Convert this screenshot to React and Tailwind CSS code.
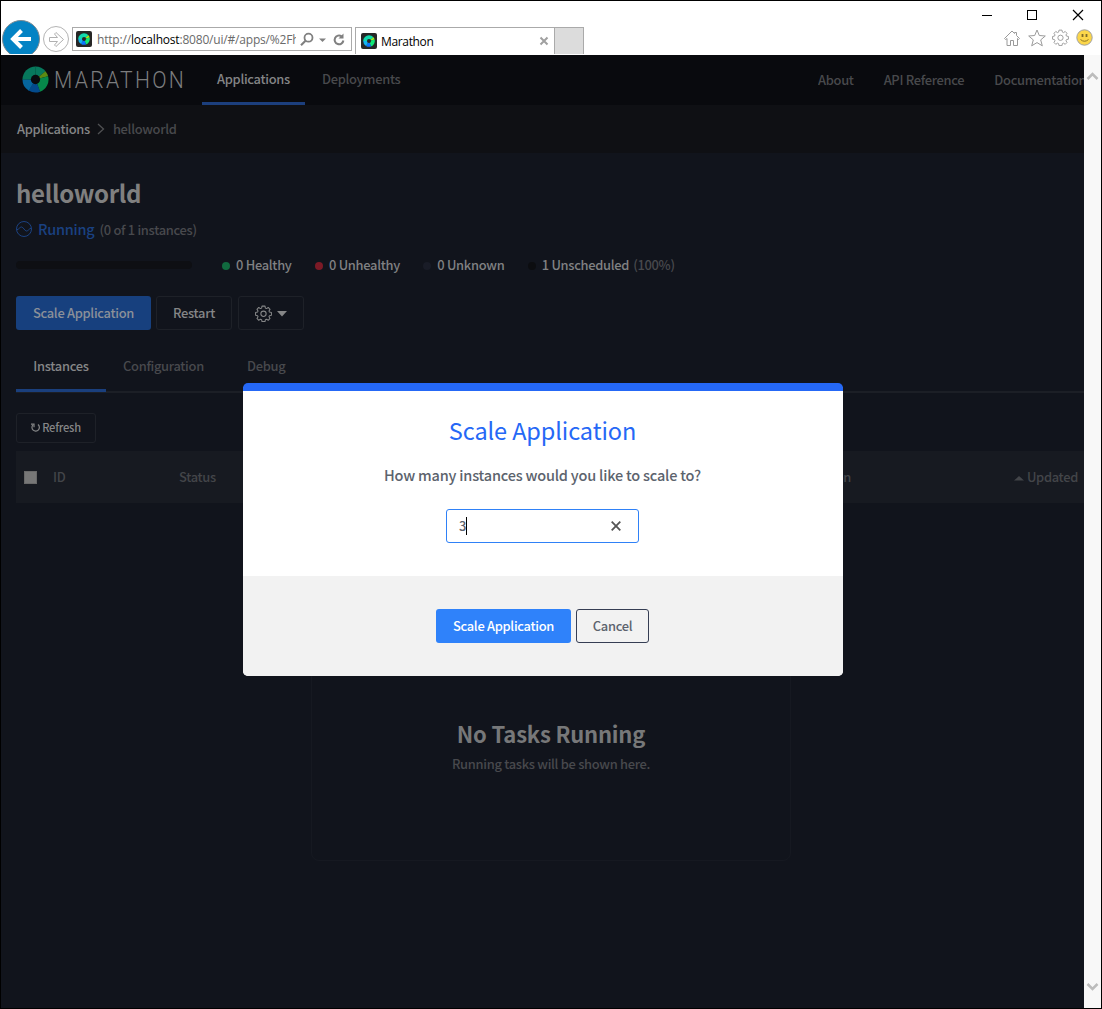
import React from "react";

function Ring({ className, dim }) {
  const c = dim
    ? ["#07785c", "#5b8a12", "#06884a", "#034a8c", "#06659c", "#07785c"]
    : ["#0fdfa8", "#a6f01c", "#10e878", "#0a74ff", "#12b4f0", "#10d8b0"];
  const seg = (a, b) => {
    const r = Math.PI / 180;
    const x1 = 14 + 13.5 * Math.cos(a * r), y1 = 14 + 13.5 * Math.sin(a * r);
    const x2 = 14 + 13.5 * Math.cos(b * r), y2 = 14 + 13.5 * Math.sin(b * r);
    return `M14 14L${x1} ${y1}A13.5 13.5 0 0 1 ${x2} ${y2}Z`;
  };
  const stops = [[-91, -39], [-40, -14], [-15, 70], [69, 122], [121, 181], [180, 270]];
  return (
    <svg viewBox="0 0 28 28" className={className}>
      {stops.map(([a, b], i) => <path key={a} d={seg(a, b)} fill={c[i]} />)}
      <circle cx="14" cy="14" r="4.8" fill={dim ? "#090a0e" : "#262626"} />
    </svg>
  );
}

function Favicon() {
  return (
    <span className="flex h-4 w-4 shrink-0 items-center justify-center rounded-[2px] bg-[#262626]">
      <Ring className="h-3 w-3" />
    </span>
  );
}

function Gear({ className, strokeWidth }) {
  return (
    <svg viewBox="0 0 18 18" className={className} fill="none" stroke="currentColor" strokeWidth={strokeWidth} strokeLinejoin="round">
      <path d="M7.4 1.2h3.2l.4 2.1 1.2.5 1.8-1.2 1.9 2-1.1 1.7.5 1.2 2.1.4v2.9l-2.1.5-.5 1.2 1.1 1.7-1.9 2-1.8-1.2-1.2.5-.4 2.1H7.4L7 15.500l-1.200-.500-1.800 1.200-1.900-2 1.100-1.700-.500-1.200L.6 10.800V7.900l2.100-.4.500-1.200L2.100 4.600l1.900-2 1.800 1.200L7 3.300z" />
      <circle cx="9" cy="9.300" r="2.800" />
    </svg>
  );
}

function BrowserChrome() {
  return (
    <header className="flex h-[54px] shrink-0 justify-between overflow-hidden bg-white">
      <div className="flex">
        <svg className="h-[53px] w-[71px] shrink-0" viewBox="0 0 71 53">
          <circle cx="20" cy="38" r="18.500" fill="#0483c4" stroke="#7c8a92" strokeWidth="1" />
          <path d="M30 38H13M20.500 29.500L12 38l8.500 8.500" stroke="#fff" strokeWidth="4" fill="none" />
          <circle cx="55" cy="38" r="12.500" fill="#fff" stroke="#b4b4b4" />
          <path d="M48.500 36.500h8l-3-3.500 1.500-1.500 7.500 7-7.500 7-1.500-1.500 3-3.500h-8z" fill="none" stroke="#b0b0b0" />
        </svg>
        <div className="mt-[26px] flex h-6 w-[280px] items-center border border-[#aaa] pl-[3px]">
          <Favicon />
          <span className="ml-[5px] mt-0.5 w-[199px] overflow-hidden whitespace-nowrap font-['Open_Sans',sans-serif] text-[12px] font-normal leading-5 tracking-[-0.190px] text-[#6a6a6a]">
            http://<span className="text-black">localhost</span>:8080/ui/#/apps/%2Fh
          </span>
          <svg viewBox="0 0 50 16" className="ml-[4px] mt-0.5 h-4 w-[50px] shrink-0" fill="none" stroke="#808080">
            <circle cx="8.500" cy="5.700" r="4" strokeWidth="1.800" />
            <path d="M5.500 8.700L1 13.200" strokeWidth="2.200" />
            <path d="M19 6.500h7l-3.500 3.500z" fill="#808080" stroke="none" />
            <path d="M41.500 4.200A4.400 4.400 0 1 0 43.400 8.500" strokeWidth="2" />
            <path d="M43.500 1.500V6.500H38.500z" fill="#808080" stroke="none" />
          </svg>
        </div>
        <div className="ml-[3px] mt-[26px] flex h-[27px] w-[200px] items-center border border-b-0 border-[#aaa] pl-[5px] pr-[5px]">
          <Favicon />
          <span className="ml-[4px] mt-0.5 grow font-['Open_Sans',sans-serif] text-[12px] font-normal leading-5 tracking-[-0.350px] text-black">Marathon</span>
          <svg viewBox="0 0 10 10" className="h-[10px] w-[10px]" stroke="#a0a0a0" strokeWidth="2"><path d="M1.500 1.500l7 7M8.500 1.500l-7 7" /></svg>
        </div>
        <div className="mt-[26px] h-[27px] w-[29px] border border-b-0 border-l-0 border-[#aaa] bg-[#dcdcdc]" />
      </div>
      <div className="flex w-[120px] flex-col">
        <svg viewBox="0 0 120 28" className="h-7 w-[120px] shrink-0" fill="none" stroke="#000" shapeRendering="crispEdges">
          <path d="M1 14.500h10" />
          <rect x="46.500" y="9.500" width="9" height="9" />
          <path d="M92 9l10 10M102 9L92 19" shapeRendering="auto" strokeWidth="1.200" />
        </svg>
        <div className="flex gap-[8px] pl-[23px] pt-px text-[#9a9a9a]">
          <svg viewBox="0 0 16 16" className="h-4 w-4 shrink-0" fill="none" stroke="currentColor"><path d="M.5 8.500L8 1l2.500 2.500V2.500h2v3l3 3-1 1-1-1v7H9.500v-5h-3v5H3v-7l-1.500 1z" /></svg>
          <svg viewBox="0 0 18 18" className="-mt-px h-[18px] w-[18px] shrink-0" fill="none" stroke="currentColor"><path d="M9 1l2.300 5.500 6 .5-4.600 3.900 1.600 5.900L9 13.600l-5.300 3.200 1.600-5.900L.7 7l6-.5z" /></svg>
          <Gear className="-ml-[2px] -mt-px h-[17px] w-[17px] shrink-0" strokeWidth="1" />
          <svg viewBox="0 0 17 17" className="-ml-px h-[17px] w-[17px] shrink-0 -mt-px"><circle cx="8.500" cy="8.500" r="7.700" fill="#fbd64a" stroke="#a0a0a0" /><path d="M6.500 5v3M10.500 5v3" stroke="#7d6a2b" strokeWidth="1.800" /><path d="M4.500 10.500q4 3.500 8 0" fill="none" stroke="#8d7524" /></svg>
        </div>
      </div>
    </header>
  );
}

function NavBar() {
  return (
    <nav className="flex h-[50px] shrink-0 bg-[#090a0e] text-[#48494c]">
      <Ring dim className="ml-[21px] mt-[11px] h-[27px] w-[27px] shrink-0" />
      <div className="ml-[5px] w-[148px] shrink-0 pt-[10px]">
        <span className="inline-block origin-left scale-x-[0.88] whitespace-nowrap font-[Roboto,sans-serif] text-[24px] font-light leading-[30px] tracking-[2.600px] text-[#7c7d7e]">MARATHON</span>
      </div>
      <div className="flex h-[50px] w-[103px] shrink-0 justify-center border-b-[3px] border-[#1c3f7d] leading-[48px] text-[#848586]">Applications</div>
      <div className="ml-[17px] leading-[48px]">Deployments</div>
      <div className="ml-auto flex w-[266px] shrink-0 gap-[30px] overflow-hidden whitespace-nowrap leading-[50px]">
        <span>About</span><span>API Reference</span><span>Documentation</span>
      </div>
    </nav>
  );
}

function Legend({ dot, label, extra }) {
  return (
    <span className="flex items-center whitespace-nowrap">
      <i className={`mr-[6px] mt-[2px] h-2 w-2 rounded-full ${dot}`} />
      {label}
      {extra && <span className="ml-1 text-[#48494d]">{extra}</span>}
    </span>
  );
}

function AppDetail() {
  return (
    <main className="flex grow flex-col overflow-hidden pl-[15px] text-[#48494d]">
      <h1 className="mt-[20px] h-10 whitespace-nowrap text-[24px] font-bold leading-10 tracking-[-0.300px] text-[#808080]">helloworld</h1>
      <div className="mt-[6px] flex h-5 items-center whitespace-nowrap">
        <svg viewBox="0 0 16 16" className="h-4 w-4" fill="none" stroke="#1c4280"><circle cx="8" cy="8" r="7.500" /><path d="M.8 8.800C3 8.500 3.500 6 5.500 6S8.500 10 10.500 10 13 7.500 15.200 7.200" /></svg>
        <span className="ml-[6px] text-[14.500px] tracking-[-0.250px] text-[#1a4181]">Running</span>
        <span className="ml-[5px] pt-px">(0 of 1 instances)</span>
      </div>
      <div className="mt-[16px] flex h-5 items-center text-[#808183]">
        <div className="mr-[30px] h-2 w-[176px] rounded-sm bg-[#0e0f13]" />
        <div className="flex gap-[23.400px]">
          <Legend dot="bg-[#116a3f]" label="0 Healthy" />
          <Legend dot="bg-[#7c1a26]" label="0 Unhealthy" />
          <Legend dot="bg-[#191c27]" label="0 Unknown" />
          <Legend dot="bg-[#0c0d10]" label="1 Unscheduled" extra="(100%)" />
        </div>
      </div>
      <div className="mt-[21px] flex h-[34px] gap-[5px] leading-[34px] text-[#858687]">
        <button className="w-[135px] rounded-[3px] bg-[#17407e] text-[#8b9099]">Scale Application</button>
        <button className="w-[76px] rounded-[3px] border border-[#1e2128] leading-8">Restart</button>
        <button className="ml-px flex w-[66px] items-center justify-center gap-[5px] rounded-[3px] border border-[#1e2128] pr-px">
          <Gear className="h-[17px] w-[17px]" strokeWidth="1.100" />
          <svg viewBox="0 0 10 6" className="mt-[2px] h-[6px] w-[10px] fill-current"><path d="M0 0h10L5 5.500z" /></svg>
        </button>
      </div>
      <div className="mt-[12px] flex h-[51px] shrink-0 items-stretch border-b-2 border-[#1c1f26] leading-[48px]">
        <span className="-mb-0.5 h-[50px] w-[90px] border-b-[3px] border-[#1a3f7d] text-center text-[#858687]">Instances</span>
        <span className="ml-[17px]">Configuration</span>
        <span className="ml-[43px]">Debug</span>
      </div>
      <button className="mt-[20px] flex h-[30px] w-20 shrink-0 items-center justify-center gap-[2px] rounded-[3px] border border-[#1e2128] pb-[2px] text-[11.100px] tracking-[-0.200px] text-[#858687]">
        <svg viewBox="0 0 9 9" className="h-[9px] w-[9px]" fill="none" stroke="currentColor" strokeWidth="1.200"><path d="M7 1.500A3.700 3.700 0 1 1 2 1.800" /><path d="M0 1.200h3v3" /></svg>
        Refresh
      </button>
      <div className="mt-[8px] flex h-[52px] shrink-0 items-center bg-[#171a21] text-[#434549]">
        <i className="ml-2 h-[13px] w-[13px] border border-[#696969] bg-[#777]" />
        <span className="ml-[16px] w-[126px]">ID</span>
        <span className="w-[600px]">Status</span>
        <span className="w-[72px] text-right">Version</span>
        <svg viewBox="0 0 10 5" className="ml-auto mt-0.5 h-[5px] w-[10px] fill-current"><path d="M0 4.500h10L5 0z" /></svg>
        <span className="ml-[3px] mr-[6px]">Updated</span>
      </div>
      <section className="ml-[295px] mt-[40px] flex h-[318px] w-[480px] shrink-0 flex-col items-center rounded-[8px] border border-[#161921]">
        <h2 className="mt-[169px] text-[22px] font-bold leading-10 tracking-[-0.200px] text-[#777879]">No Tasks Running</h2>
        <p className="mt-[1px] leading-5">Running tasks will be shown here.</p>
      </section>
    </main>
  );
}

function ScaleDialog() {
  return (
    <div role="dialog" className="absolute left-[242px] top-[382px] flex h-[293px] w-[600px] flex-col items-center overflow-hidden rounded-[5px] border-t-[8px] border-[#2568f6] bg-white text-[#5c636d]">
      <h2 className="mr-px mt-[19px] text-[23.500px] font-normal leading-10 tracking-[-0.100px] text-[#2568f6]">Scale Application</h2>
      <p className="mr-px mt-[15px] text-[14.500px] leading-5 tracking-[-0.200px]">How many instances would you like to scale to?</p>
      <div className="mr-px mt-[24px] flex h-[34px] w-[193px] items-center rounded-[3px] border border-[#2f81f7] pl-3 pr-[17px]">
        <span>3</span><i className="h-[18px] w-px bg-black" />
        <svg viewBox="0 0 10 10" className="ml-auto h-[10px] w-[10px]" stroke="#555" strokeWidth="1.800"><path d="M.7.700l8.600 8.600M9.300.700L.7 9.300" /></svg>
      </div>
      <footer className="mt-[33px] flex w-full grow justify-center gap-[5px] bg-[#f2f2f2] pr-px pt-[33px]">
        <button className="h-[34px] w-[135px] rounded-[3px] bg-[#2f82fa] text-white">Scale Application</button>
        <button className="h-[34px] w-[73px] rounded-[3px] border border-[#363e54]">Cancel</button>
      </footer>
    </div>
  );
}

export default function App() {
  return (
    <div className="relative flex h-[1009px] w-[1102px] flex-col overflow-hidden border border-black bg-[#11141c] font-['Noto_Sans_CJK_SC',sans-serif] text-[12.900px] font-medium tracking-[-0.300px]">
      <BrowserChrome />
      <div className="flex grow">
        <div className="flex w-[1083px] flex-col">
          <NavBar />
          <div className="flex h-12 shrink-0 items-center bg-[#0f1014] pl-4 text-[#48494c]">
            <span className="text-[#848586]">Applications</span>
            <svg viewBox="0 0 8 12" className="mx-[7.500px] h-3 w-2 shrink-0" fill="none" stroke="#505153" strokeWidth="1.300"><path d="M1 1l5.500 5L1 11" /></svg>
            <span>helloworld</span>
          </div>
          <AppDetail />
        </div>
        <aside className="flex w-[17px] flex-col justify-between bg-[#f8f8f8] pb-4 pt-[16px]">
          <svg viewBox="0 0 17 10" className="h-[10px] w-[17px]" fill="none" stroke="#bcbcbc" strokeWidth="2.500"><path d="M3.500 8l5-5 5 5" /></svg>
          <svg viewBox="0 0 17 10" className="h-[10px] w-[17px]" fill="none" stroke="#bcbcbc" strokeWidth="2.500"><path d="M3.500 2l5 5 5-5" /></svg>
        </aside>
      </div>
      <ScaleDialog />
    </div>
  );
}
